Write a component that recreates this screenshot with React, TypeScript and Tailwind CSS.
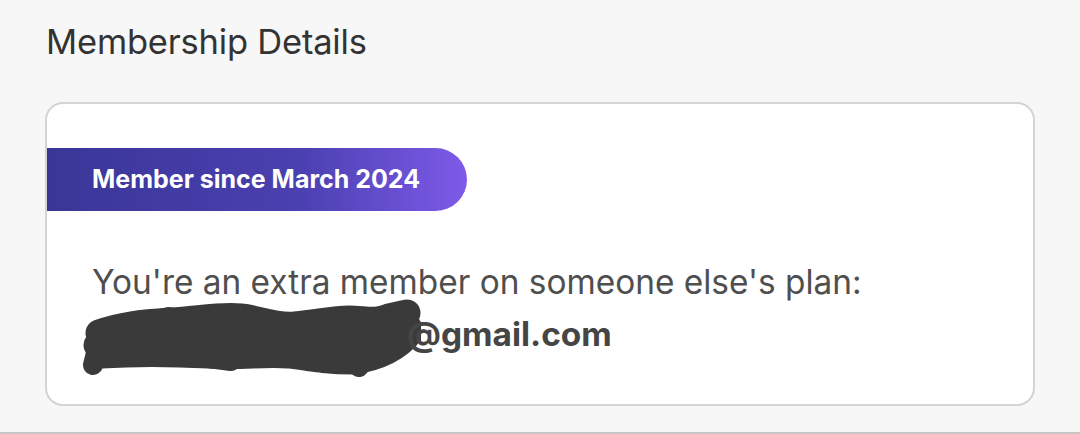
// Membership details card
const FONT = { fontFamily: "Inter, 'Noto Sans', sans-serif" };

function Scribble() {
  // hand-drawn redaction over the email user name
  return (
    <svg width="340" height="80" viewBox="0 0 340 80" className="shrink-0 mt-[6px]" aria-hidden>
      <g fill="none" stroke="#3a3a3a" strokeLinecap="round" strokeLinejoin="round">
        <g strokeWidth="27">
          <path d="M18,36 C40,28 60,26 90,24 C120,22 140,18 160,20 C180,22 192,30 214,28 C236,26 252,22 268,22 C284,22 294,26 308,20 L326,16" />
          <path d="M16,48 C60,44 120,42 170,46 C210,50 240,50 280,40 L326,28" />
          <path d="M20,58 C50,56 90,56 128,58 C160,60 184,56 208,58 C236,62 250,64 272,64 C300,60 318,50 330,34" />
        </g>
        <g strokeWidth="20">
          <path d="M16,52 L12,68" />
          <path d="M262,58 L278,70" />
          <path d="M70,24 L88,20" />
          <path d="M120,60 L150,64" />
        </g>
      </g>
    </svg>
  );
}

export default function App() {
  return (
    <div className="h-[434px] w-[1080px] bg-[#f7f7f7] border-b-2 border-[#c6c6c6] flex flex-col" style={FONT}>
      <h2 className="pl-[46px] pt-[21px] text-[34.5px] leading-[42px] font-normal text-[#333333] tracking-[-0.2px]">Membership Details</h2>

      <div className="mx-[45px] mt-[39px] bg-white border-2 border-[#d4d4d4] rounded-[18px] overflow-hidden pt-[44px] pb-[44px]">
        <div className="w-[420px] h-[63px] rounded-r-full bg-linear-to-r from-[#3a3697] via-[#4a40b0] via-60% to-[#7e5ae9] flex items-center pl-[45px]">
          <span className="text-white font-bold text-[25px]">Member since March 2024</span>
        </div>

        <div className="pl-[45px] pt-[45px] text-[33.4px] leading-[52px] text-[#4f4f4f]">
          <p>You're an extra member on someone else's plan:</p>
          <div className="flex items-center h-[52px] -ml-[11px]">
            <Scribble />
            <span className="-ml-[14px] font-bold text-[#454545]">@gmail.com</span>
          </div>
        </div>
      </div>
    </div>
  );
}
